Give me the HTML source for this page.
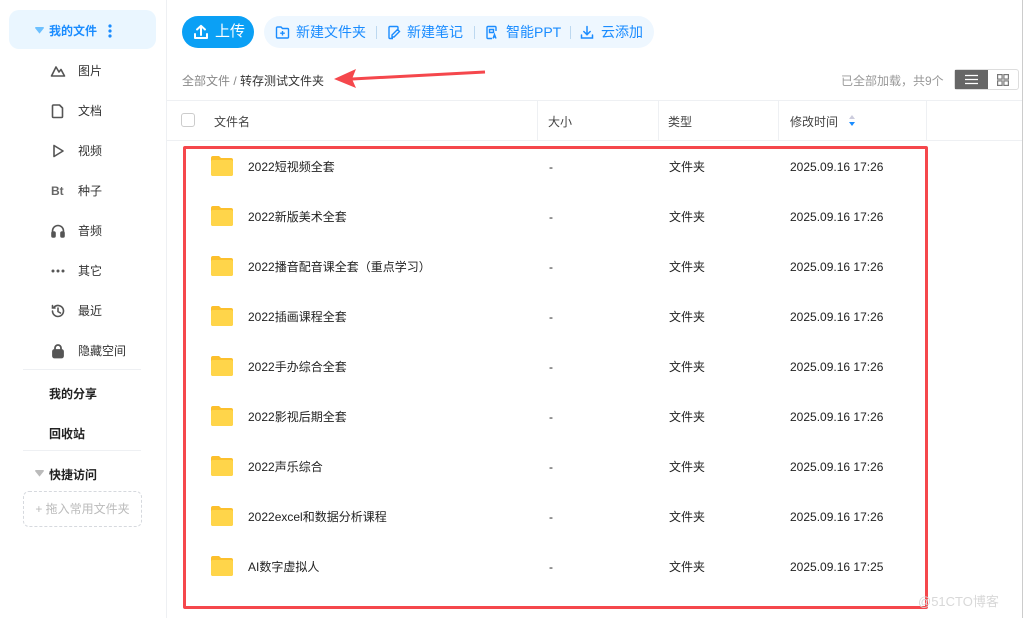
<!DOCTYPE html>
<html><head><meta charset="utf-8"><style>
*{margin:0;padding:0;box-sizing:border-box}
body{width:1029px;height:618px;overflow:hidden;background:#fff;font-family:"Liberation Sans","Noto Sans CJK SC",sans-serif;font-size:13px;color:#333;position:relative}
.side{position:absolute;left:0;top:0;width:167px;height:618px;border-right:1px solid #eef0f3;background:#fff}
.my{position:absolute;left:9px;top:10px;width:147px;height:39px;background:#eaf6ff;border-radius:10px;color:#1a8cff;font-weight:bold;font-size:12px;line-height:42px;padding-left:40px}
.it{position:absolute;left:50px;font-size:12px;color:#333;height:16px;line-height:16px}
.it svg{position:absolute;left:0;top:0}
.it span.t{position:absolute;left:28px;white-space:nowrap}
.b{position:absolute;left:49px;font-weight:bold;font-size:12px;color:#222}
.hr{position:absolute;left:23px;width:118px;height:1px;background:#eef0f3}
.up{position:absolute;left:182px;top:16px;width:72px;height:32px;border-radius:16px;background:#0ba0f5;color:#fff;font-size:15px;line-height:32px;padding-left:33px}
.bar{position:absolute;left:264px;top:16px;width:390px;height:32px;border-radius:16px;background:#eef7ff;color:#1a8cff;font-size:14px;line-height:32px}
.bar span{position:absolute;white-space:nowrap}
.bar svg{position:absolute;top:9px}
.sep{position:absolute;top:10px;width:1px;height:13px;background:#bcd8f0}
.crumb{position:absolute;left:182px;top:72px;font-size:12px;color:#888}
.crumb b{font-weight:normal;color:#333}
.head{position:absolute;left:167px;top:100px;width:855px;height:41px;border-top:1px solid #eef0f3;border-bottom:1px solid #eef0f3;color:#444;font-size:12px}
.head span{position:absolute;top:12px}
.vl{position:absolute;top:0;width:1px;height:40px;background:#eef0f3}
.row{position:absolute;left:167px;height:50px;width:760px;font-size:12px;color:#222}
.row span{position:absolute;top:1px;line-height:50px;white-space:nowrap}
.fold{position:absolute;left:43px;top:14px;width:24px;height:22px}
.red{position:absolute;left:183px;top:146px;width:745px;height:463px;border:3px solid #f5474c;border-radius:2px}
</style></head><body>
<div class="side">
<div class="my"><svg style="position:absolute;left:26px;top:17px" width="9" height="7" viewBox="0 0 9 7"><path d="M0 1Q0 0 1 0H8Q9 0 9 1L5 6Q4.5 7 4 6Z" fill="#6cc0ff"/></svg>我的文件<svg style="position:absolute;left:99px;top:14px" width="4" height="14"><circle cx="2" cy="2" r="1.6" fill="#1a8cff"/><circle cx="2" cy="7" r="1.6" fill="#1a8cff"/><circle cx="2" cy="12" r="1.6" fill="#1a8cff"/></svg></div>
<div class="it" style="top:63px"><svg width="16" height="16" viewBox="0 0 16 16" fill="none" stroke="#555" stroke-width="1.6"><path d="M1.5 13L6 4l3 5 2-2.5 3.5 6.5z" stroke-linejoin="round"/></svg><span class="t">图片</span></div>
<div class="it" style="top:103px"><svg width="16" height="16" viewBox="0 0 16 16" fill="none" stroke="#555" stroke-width="1.6"><path d="M3.5 2h6l3 3v8.5a1 1 0 0 1-1 1h-8a1 1 0 0 1-1-1v-10.5a1 1 0 0 1 1-1z" stroke-linejoin="round"/></svg><span class="t">文档</span></div>
<div class="it" style="top:143px"><svg width="16" height="16" viewBox="0 0 16 16" fill="none" stroke="#555" stroke-width="1.6"><path d="M4 2.5v11l9-5.5z" stroke-linejoin="round"/></svg><span class="t">视频</span></div>
<div class="it" style="top:183px"><span style="position:absolute;left:1px;font-weight:bold;color:#666;font-size:12px">Bt</span><span class="t">种子</span></div>
<div class="it" style="top:223px"><svg width="16" height="16" viewBox="0 0 16 16" fill="none" stroke="#555" stroke-width="1.6"><path d="M2.5 12V8a5.5 5.5 0 0 1 11 0v4"/><rect x="2" y="9" width="3" height="5" rx="1" fill="#555"/><rect x="11" y="9" width="3" height="5" rx="1" fill="#555"/></svg><span class="t">音频</span></div>
<div class="it" style="top:263px"><svg width="16" height="16"><circle cx="3" cy="8" r="1.5" fill="#555"/><circle cx="8" cy="8" r="1.5" fill="#555"/><circle cx="13" cy="8" r="1.5" fill="#555"/></svg><span class="t">其它</span></div>
<div class="it" style="top:303px"><svg width="16" height="16" viewBox="0 0 16 16" fill="none" stroke="#555" stroke-width="1.6"><path d="M2.5 8a5.5 5.5 0 1 0 1.6-3.9M2.5 2.5v2.5h2.5M8 5v3.5l2.5 1.5" stroke-linecap="round"/></svg><span class="t">最近</span></div>
<div class="it" style="top:343px"><svg width="16" height="16" viewBox="0 0 16 16" fill="none" stroke="#555" stroke-width="1.8"><path d="M5 7V5a3 3 0 0 1 6 0v2"/><rect x="3" y="7" width="10" height="7.5" rx="1.5" fill="#555"/></svg><span class="t">隐藏空间</span></div>
<div class="hr" style="top:369px"></div>
<div class="b" style="top:385px">我的分享</div>
<div class="b" style="top:425px">回收站</div>
<div class="hr" style="top:450px"></div>
<div class="b" style="top:466px"><svg style="position:absolute;left:-14px;top:4px" width="9" height="7" viewBox="0 0 9 7"><path d="M0 1Q0 0 1 0H8Q9 0 9 1L5 6Q4.5 7 4 6Z" fill="#bbb"/></svg>快捷访问</div>
<div style="position:absolute;left:23px;top:491px;width:119px;height:36px;border:1px dashed #d6d9de;border-radius:6px;color:#bbb;font-size:12px;line-height:34px;text-align:center">+ 拖入常用文件夹</div>
</div>
<div class="up"><svg style="position:absolute;left:11px;top:8px" width="16" height="16" viewBox="0 0 16 16" fill="none" stroke="#fff" stroke-width="2" stroke-linecap="round" stroke-linejoin="round"><path d="M8 11V2M4 5.5L8 1.8l4 3.7M2 10v4h12v-4"/></svg>上传</div>
<div class="bar">
<svg style="left:11px" width="15" height="15" viewBox="0 0 15 15" fill="none" stroke="#1a8cff" stroke-width="1.4"><path d="M1.5 3a1 1 0 0 1 1-1h3.5l1.5 1.5h5a1 1 0 0 1 1 1v7.5a1 1 0 0 1-1 1h-10a1 1 0 0 1-1-1z M7.5 6v4.5M5.2 8.2h4.6"/></svg><span style="left:32px">新建文件夹</span><div class="sep" style="left:112px"></div>
<svg style="left:123px" width="14" height="15" viewBox="0 0 14 15" fill="none" stroke="#1a8cff" stroke-width="1.4"><path d="M11 6V2.5a1 1 0 0 0-1-1H3a1 1 0 0 0-1 1v10a1 1 0 0 0 1 1h3M5 10l5.5-5.5 2 2L7 12H5z"/></svg><span style="left:143px">新建笔记</span><div class="sep" style="left:210px"></div>
<svg style="left:221px" width="14" height="15" viewBox="0 0 14 15" fill="none" stroke="#1a8cff" stroke-width="1.4"><path d="M11 6V2.5a1 1 0 0 0-1-1H3a1 1 0 0 0-1 1v10a1 1 0 0 0 1 1h4M4.5 4.5h4v3h-4zM8 13.5l1.5-4 1.5 4M8.5 12h2"/></svg><span style="left:242px">智能PPT</span><div class="sep" style="left:306px"></div>
<svg style="left:316px" width="14" height="15" viewBox="0 0 14 15" fill="none" stroke="#1a8cff" stroke-width="1.5" stroke-linecap="round"><path d="M7 1.5v8M3.8 6.5L7 9.7l3.2-3.2M1.5 10v3h11v-3"/></svg><span style="left:337px">云添加</span>
</div>
<div class="crumb">全部文件 / <b>转存测试文件夹</b></div>
<svg style="position:absolute;left:330px;top:64px" width="160" height="26"><path d="M155 8 L22 15" stroke="#f5474c" stroke-width="3"/><path d="M4 15 L26 5 L22 15 L26 24 Z" fill="#f5474c"/></svg>
<div style="position:absolute;left:841px;top:72px;font-size:12px;color:#999">已全部加载，共9个</div>
<div style="position:absolute;left:954px;top:69px;width:65px;height:21px;border:1px solid #ddd;border-radius:3px"><div style="position:absolute;left:0;top:0;width:33px;height:19px;background:#666"><svg style="position:absolute;left:10px;top:4px" width="13" height="11"><path d="M0 1.5h13M0 5.5h13M0 9.5h13" stroke="#fff" stroke-width="1.3"/></svg></div><svg style="position:absolute;left:42px;top:4px" width="12" height="12" fill="none" stroke="#777" stroke-width="1.2"><rect x="0.6" y="0.6" width="4.5" height="4.5"/><rect x="6.9" y="0.6" width="4.5" height="4.5"/><rect x="0.6" y="6.9" width="4.5" height="4.5"/><rect x="6.9" y="6.9" width="4.5" height="4.5"/></svg></div>
<div class="head">
<div style="position:absolute;left:14px;top:12px;width:14px;height:14px;border:1px solid #ccc;border-radius:3px"></div>
<span style="left:47px">文件名</span>
<div class="vl" style="left:370px"></div><span style="left:381px">大小</span>
<div class="vl" style="left:491px"></div><span style="left:501px">类型</span>
<div class="vl" style="left:611px"></div><span style="left:623px">修改时间</span>
<svg style="position:absolute;left:682px;top:14px" width="6" height="12"><path d="M3 0L6 4H0z" fill="#ccd"/><path d="M3 11L6 7H0z" fill="#1a8cff"/></svg>
<div class="vl" style="left:759px"></div>
</div>
<div style="position:absolute;left:1022px;top:0;width:1px;height:618px;background:#ccc"></div>
<div class="row" style="top:141px"><svg class="fold" viewBox="0 0 24 22"><path d="M1 3a2 2 0 0 1 2-2h6l2 2h10a2 2 0 0 1 2 2v14a2 2 0 0 1-2 2H3a2 2 0 0 1-2-2z" fill="#fcc02c"/><rect x="1" y="5" width="22" height="16" rx="2" fill="#ffd54a"/></svg><span style="left:81px">2022短视频全套</span><span style="left:382px">-</span><span style="left:502px">文件夹</span><span style="left:623px">2025.09.16 17:26</span></div>
<div class="row" style="top:191px"><svg class="fold" viewBox="0 0 24 22"><path d="M1 3a2 2 0 0 1 2-2h6l2 2h10a2 2 0 0 1 2 2v14a2 2 0 0 1-2 2H3a2 2 0 0 1-2-2z" fill="#fcc02c"/><rect x="1" y="5" width="22" height="16" rx="2" fill="#ffd54a"/></svg><span style="left:81px">2022新版美术全套</span><span style="left:382px">-</span><span style="left:502px">文件夹</span><span style="left:623px">2025.09.16 17:26</span></div>
<div class="row" style="top:241px"><svg class="fold" viewBox="0 0 24 22"><path d="M1 3a2 2 0 0 1 2-2h6l2 2h10a2 2 0 0 1 2 2v14a2 2 0 0 1-2 2H3a2 2 0 0 1-2-2z" fill="#fcc02c"/><rect x="1" y="5" width="22" height="16" rx="2" fill="#ffd54a"/></svg><span style="left:81px">2022播音配音课全套（重点学习）</span><span style="left:382px">-</span><span style="left:502px">文件夹</span><span style="left:623px">2025.09.16 17:26</span></div>
<div class="row" style="top:291px"><svg class="fold" viewBox="0 0 24 22"><path d="M1 3a2 2 0 0 1 2-2h6l2 2h10a2 2 0 0 1 2 2v14a2 2 0 0 1-2 2H3a2 2 0 0 1-2-2z" fill="#fcc02c"/><rect x="1" y="5" width="22" height="16" rx="2" fill="#ffd54a"/></svg><span style="left:81px">2022插画课程全套</span><span style="left:382px">-</span><span style="left:502px">文件夹</span><span style="left:623px">2025.09.16 17:26</span></div>
<div class="row" style="top:341px"><svg class="fold" viewBox="0 0 24 22"><path d="M1 3a2 2 0 0 1 2-2h6l2 2h10a2 2 0 0 1 2 2v14a2 2 0 0 1-2 2H3a2 2 0 0 1-2-2z" fill="#fcc02c"/><rect x="1" y="5" width="22" height="16" rx="2" fill="#ffd54a"/></svg><span style="left:81px">2022手办综合全套</span><span style="left:382px">-</span><span style="left:502px">文件夹</span><span style="left:623px">2025.09.16 17:26</span></div>
<div class="row" style="top:391px"><svg class="fold" viewBox="0 0 24 22"><path d="M1 3a2 2 0 0 1 2-2h6l2 2h10a2 2 0 0 1 2 2v14a2 2 0 0 1-2 2H3a2 2 0 0 1-2-2z" fill="#fcc02c"/><rect x="1" y="5" width="22" height="16" rx="2" fill="#ffd54a"/></svg><span style="left:81px">2022影视后期全套</span><span style="left:382px">-</span><span style="left:502px">文件夹</span><span style="left:623px">2025.09.16 17:26</span></div>
<div class="row" style="top:441px"><svg class="fold" viewBox="0 0 24 22"><path d="M1 3a2 2 0 0 1 2-2h6l2 2h10a2 2 0 0 1 2 2v14a2 2 0 0 1-2 2H3a2 2 0 0 1-2-2z" fill="#fcc02c"/><rect x="1" y="5" width="22" height="16" rx="2" fill="#ffd54a"/></svg><span style="left:81px">2022声乐综合</span><span style="left:382px">-</span><span style="left:502px">文件夹</span><span style="left:623px">2025.09.16 17:26</span></div>
<div class="row" style="top:491px"><svg class="fold" viewBox="0 0 24 22"><path d="M1 3a2 2 0 0 1 2-2h6l2 2h10a2 2 0 0 1 2 2v14a2 2 0 0 1-2 2H3a2 2 0 0 1-2-2z" fill="#fcc02c"/><rect x="1" y="5" width="22" height="16" rx="2" fill="#ffd54a"/></svg><span style="left:81px">2022excel和数据分析课程</span><span style="left:382px">-</span><span style="left:502px">文件夹</span><span style="left:623px">2025.09.16 17:26</span></div>
<div class="row" style="top:541px"><svg class="fold" viewBox="0 0 24 22"><path d="M1 3a2 2 0 0 1 2-2h6l2 2h10a2 2 0 0 1 2 2v14a2 2 0 0 1-2 2H3a2 2 0 0 1-2-2z" fill="#fcc02c"/><rect x="1" y="5" width="22" height="16" rx="2" fill="#ffd54a"/></svg><span style="left:81px">AI数字虚拟人</span><span style="left:382px">-</span><span style="left:502px">文件夹</span><span style="left:623px">2025.09.16 17:25</span></div>
<div class="red"></div>
<div style="position:absolute;left:918px;top:591px;font-size:13px;color:#d8d8d8">@51CTO博客</div>
</body></html>
